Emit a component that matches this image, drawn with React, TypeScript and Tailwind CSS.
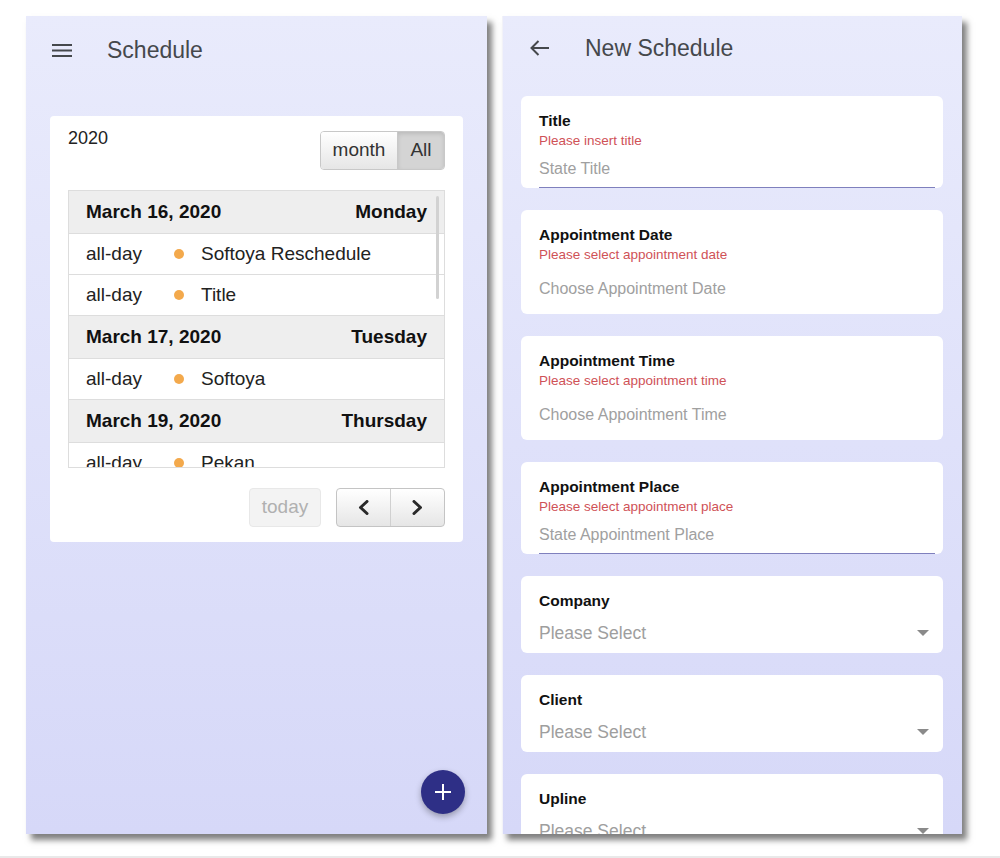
import React from "react";

interface AgendaDay {
  date: string;
  weekday: string;
  events: string[];
}

const agenda: AgendaDay[] = [
  { date: "March 16, 2020", weekday: "Monday", events: ["Softoya Reschedule", "Title"] },
  { date: "March 17, 2020", weekday: "Tuesday", events: ["Softoya"] },
  { date: "March 19, 2020", weekday: "Thursday", events: ["Pekan"] },
];

type Field =
  | { kind: "input"; label: string; error: string; placeholder: string }
  | { kind: "picker"; label: string; error: string; placeholder: string }
  | { kind: "select"; label: string };

const fields: Field[] = [
  { kind: "input", label: "Title", error: "Please insert title", placeholder: "State Title" },
  {
    kind: "picker",
    label: "Appointment Date",
    error: "Please select appointment date",
    placeholder: "Choose Appointment Date",
  },
  {
    kind: "picker",
    label: "Appointment Time",
    error: "Please select appointment time",
    placeholder: "Choose Appointment Time",
  },
  {
    kind: "input",
    label: "Appointment Place",
    error: "Please select appointment place",
    placeholder: "State Appointment Place",
  },
  { kind: "select", label: "Company" },
  { kind: "select", label: "Client" },
  { kind: "select", label: "Upline" },
];

const Chevron = ({ dir }: { dir: "left" | "right" }) => (
  <svg width="13" height="15" viewBox="0 0 13 15" fill="none">
    <polyline
      points={dir === "left" ? "10,1.5 3.5,7.5 10,13.5" : "3,1.5 9.5,7.5 3,13.5"}
      stroke="#2a2a2a"
      strokeWidth="3"
      strokeLinecap="round"
      strokeLinejoin="round"
    />
  </svg>
);

const Caret = () => (
  <svg width="12" height="6" viewBox="0 0 12 6">
    <polygon points="0,0 12,0 6,6" fill="#8a8a8a" />
  </svg>
);

const SchedulePhone = () => (
  <div className="relative w-[461px] h-[818px] shrink-0 overflow-hidden bg-linear-to-b from-[#e9ebfc] to-[#d6d8f8] shadow-[5px_6px_6px_rgba(0,0,0,0.5)]">
    <header className="h-[68px] flex items-center pl-[26px]">
      <svg width="20" height="13" viewBox="0 0 20 13">
        <rect x="0" y="0" width="20" height="2" fill="#45484c" />
        <rect x="0" y="5.5" width="20" height="2" fill="#45484c" />
        <rect x="0" y="11" width="20" height="2" fill="#45484c" />
      </svg>
      <h1 className="ml-[35px] text-[23px] text-[#45484c]">Schedule</h1>
    </header>

    <div className="mt-[32px] mx-[24px] bg-white rounded-[4px] px-[18px] pt-[12px] pb-[15px]">
      <div className="flex justify-between items-start">
        <span className="text-[18px] leading-[20px] text-[#222]">2020</span>
        <div className="mt-[3px] flex h-[39px] rounded-[4px] border border-[#c8c8c8] overflow-hidden text-[19px] text-[#333]">
          <button className="w-[76px] bg-linear-to-b from-[#ffffff] to-[#e6e6e6]">month</button>
          <button className="w-[47px] border-l border-[#c8c8c8] bg-[#d4d4d4] shadow-[inset_0_2px_4px_rgba(0,0,0,0.12)]">
            All
          </button>
        </div>
      </div>

      <div className="relative mt-[20px] h-[278px] border border-[#ddd] overflow-hidden">
        {agenda.map((day) => (
          <div key={day.date}>
            <div className="h-[43px] flex items-center justify-between px-[17px] bg-[#eeeeee] border-b border-[#ddd] text-[19px] font-bold text-[#111]">
              <span>{day.date}</span>
              <span>{day.weekday}</span>
            </div>
            {day.events.map((ev) => (
              <div
                key={ev}
                className="h-[41px] flex items-center px-[17px] border-b border-[#ddd] text-[19px] text-[#222]"
              >
                <span className="w-[88px]">all-day</span>
                <span className="w-[10px] h-[10px] rounded-full bg-[#f3a94c]" />
                <span className="ml-[17px]">{ev}</span>
              </div>
            ))}
          </div>
        ))}
        <div className="absolute right-[5px] top-[5px] w-[3px] h-[103px] rounded-full bg-[#d2d2d2]" />
      </div>

      <div className="mt-[20px] flex justify-end gap-[15px]">
        <button className="w-[72px] h-[39px] rounded-[4px] border border-[#e8e8e8] bg-[#f3f3f3] text-[19px] text-[#b0b0b0]">
          today
        </button>
        <div className="flex w-[109px] h-[39px] rounded-[4px] border border-[#c4c4c4] overflow-hidden bg-linear-to-b from-[#ffffff] to-[#e6e6e6]">
          <button className="flex-1 flex items-center justify-center">
            <Chevron dir="left" />
          </button>
          <button className="flex-1 flex items-center justify-center border-l border-[#d0d0d0]">
            <Chevron dir="right" />
          </button>
        </div>
      </div>
    </div>

    <button className="absolute right-[22px] bottom-[20px] w-[44px] h-[44px] rounded-full bg-[#2e2f86] flex items-center justify-center shadow-[0_3px_6px_rgba(0,0,0,0.3)]">
      <svg width="18" height="18" viewBox="0 0 18 18">
        <rect x="8" y="1" width="2" height="16" fill="#fff" />
        <rect x="1" y="8" width="16" height="2" fill="#fff" />
      </svg>
    </button>
  </div>
);

const FieldCard = ({ field }: { field: Field }) => {
  if (field.kind === "select") {
    return (
      <div className="bg-white rounded-[6px] pl-[18px] pr-[14px] pt-[16px] pb-[10px]">
        <div className="text-[15.5px] leading-[17px] font-bold text-[#111]">{field.label}</div>
        <div className="mt-[14px] flex items-center justify-between">
          <span className="text-[17.5px] leading-[20px] text-[#9e9e9e]">Please Select</span>
          <Caret />
        </div>
      </div>
    );
  }
  const underline = field.kind === "input";
  return (
    <div
      className={`bg-white rounded-[6px] pl-[18px] pt-[16px] ${
        underline ? "pr-[8px]" : "pr-[18px] pb-[16px]"
      }`}
    >
      <div className="text-[15.5px] leading-[17px] font-bold text-[#111]">{field.label}</div>
      <div className="mt-[4px] text-[13.5px] leading-[16px] text-[#cf5257]">{field.error}</div>
      <div
        className={`text-[16px] leading-[19px] text-[#a0a0a0] ${
          underline ? "mt-[10px] pb-[9px] border-b border-[#7f80bd]" : "mt-[16px]"
        }`}
      >
        {field.placeholder}
      </div>
    </div>
  );
};

const NewSchedulePhone = () => (
  <div className="relative w-[460px] h-[818px] shrink-0 overflow-hidden bg-linear-to-b from-[#e9ebfc] to-[#d6d8f8] border-l border-[#f2f2f8] shadow-[5px_6px_6px_rgba(0,0,0,0.5)]">
    <header className="h-[64px] flex items-center pl-[27px]">
      <svg width="20" height="16" viewBox="0 0 20 16" fill="none">
        <line x1="1.5" y1="8" x2="19" y2="8" stroke="#45484c" strokeWidth="2" />
        <polyline points="8.5,1 1.5,8 8.5,15" stroke="#45484c" strokeWidth="2" />
      </svg>
      <h1 className="ml-[35px] text-[23px] text-[#45484c]">New Schedule</h1>
    </header>

    <div className="mt-[16px] ml-[18px] mr-[19px] flex flex-col gap-[22px]">
      {fields.map((f) => (
        <FieldCard key={f.label} field={f} />
      ))}
    </div>
  </div>
);

export default function App() {
  return (
    <div className="w-[1000px] h-[858px] bg-white overflow-hidden border-b-2 border-[#e9e9e9] font-['Liberation_Sans',Arial,sans-serif]">
      <div className="flex gap-[15px] pl-[26px] pt-[16px]">
        <SchedulePhone />
        <NewSchedulePhone />
      </div>
    </div>
  );
}
